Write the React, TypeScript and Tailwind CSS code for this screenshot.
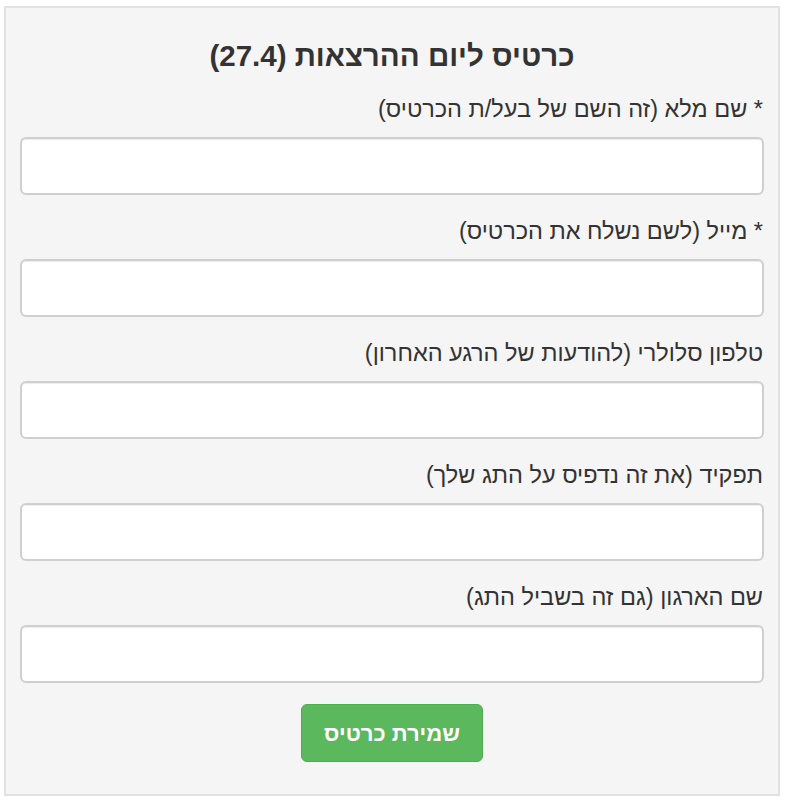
import React from "react";

const fields = [
  "* שם מלא (זה השם של בעל/ת הכרטיס)",
  "* מייל (לשם נשלח את הכרטיס)",
  "טלפון סלולרי (להודעות של הרגע האחרון)",
  "תפקיד (את זה נדפיס על התג שלך)",
  "שם הארגון (גם זה בשביל התג)",
];

const App = () => {
  return (
    <div
      className="pl-[4px] pt-[6px] text-[#333]"
      style={{ fontFamily: '"Liberation Sans", "DejaVu Sans", Arial, sans-serif' }}
    >
      <form
        dir="rtl"
        className="w-[776px] h-[790px] border-2 border-[#e2e2e2] bg-[#f5f5f5] px-[14px] pt-[31px]"
      >
        <h3 className="text-center text-[29.5px] font-bold leading-[34px] mb-[22px]">
          כרטיס ליום ההרצאות (27.4)
        </h3>
        {fields.map((label) => (
          <div key={label} className="mb-[22px]">
            <label className="block text-[23.5px] leading-[28px] mb-[14px] pr-[1px]">
              {label}
            </label>
            <input
              type="text"
              className="block w-full h-[58px] bg-white border-2 border-[#cfcfcf] rounded-[6px] shadow-[inset_0_1px_1px_rgba(0,0,0,0.075)] px-3 outline-none"
            />
          </div>
        ))}
        <div className="flex justify-center -mt-[1px]">
          <button
            type="button"
            className="w-[182px] h-[58px] bg-[#5cb85c] border border-[#4cae4c] rounded-[6px] text-white text-[22px] font-bold"
          >
            שמירת כרטיס
          </button>
        </div>
      </form>
    </div>
  );
};

export default App;
